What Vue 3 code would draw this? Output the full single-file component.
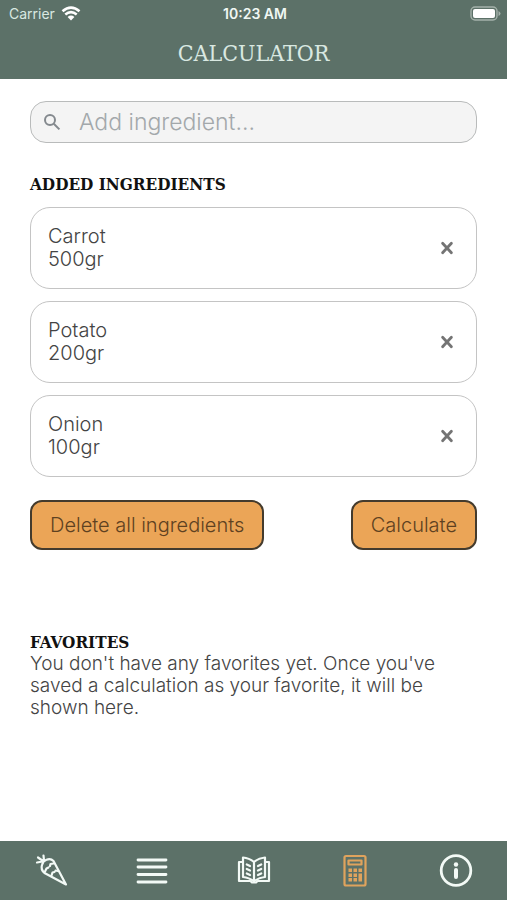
<template>
    <div class="app-screen">
        <header class="app-header">
            <div class="status-bar">
                <div class="carrier">
                    <span>Carrier</span>
                    <svg class="wifi-icon" viewBox="0 0 20 15" aria-hidden="true">
                        <path d="M1.5 5.2 Q10 -2 18.5 5.2" />
                        <path d="M4.3 8.4 Q10 3.8 15.7 8.4" />
                        <path class="wifi-dot" d="M6.6 10.9 Q10 8.2 13.4 10.9 L10 14.4 Z" />
                    </svg>
                </div>
                <span class="clock">10:23 AM</span>
                <svg class="battery-icon" viewBox="0 0 31 15" aria-hidden="true">
                    <rect class="battery-case" x="1" y="1" width="26" height="13" rx="4" />
                    <rect x="3" y="3" width="22" height="9" rx="2" fill="#fff" />
                    <path d="M28.5 5 Q30.5 6 30.5 7.5 Q30.5 9 28.5 10 Z" fill="#a4b1aa" />
                </svg>
            </div>
            <h1 class="page-title">CALCULATOR</h1>
        </header>

        <main class="content">
            <label class="search-box">
                <svg class="search-icon" viewBox="0 0 18 18" aria-hidden="true">
                    <circle cx="7" cy="7" r="5" />
                    <path d="M10.8 10.8 L16.4 16.4" />
                </svg>
                <input v-model="query" type="text" placeholder="Add ingredient..." aria-label="Add ingredient"
                    @keydown.enter="addIngredient" />
            </label>

            <h2 class="section-title">ADDED INGREDIENTS</h2>
            <ul class="ingredient-list">
                <li v-for="(item, index) in ingredients" :key="item.name" class="ingredient-card">
                    <div class="ingredient-info">
                        <div>{{ item.name }}</div>
                        <div>{{ item.amount }}gr</div>
                    </div>
                    <button class="remove-button" :aria-label="`Remove ${item.name}`" @click="removeIngredient(index)">
                        <svg viewBox="0 0 14 14" aria-hidden="true">
                            <path d="M2.6 2.2 L11.4 11.8 M11.4 2.2 L2.6 11.8" />
                        </svg>
                    </button>
                </li>
            </ul>

            <div class="actions">
                <button class="action-button" @click="ingredients = []">Delete all ingredients</button>
                <button class="action-button">Calculate</button>
            </div>

            <section class="favorites">
                <h2 class="section-title">FAVORITES</h2>
                <p>You don't have any favorites yet. Once you've saved a calculation as your favorite, it will be shown here.</p>
            </section>
        </main>

        <nav class="tab-bar">
            <button v-for="tab in tabs" :key="tab" :class="{ active: activeTab === tab }" :aria-label="tab"
                @click="activeTab = tab">
                <svg v-if="tab === 'Ingredients'" viewBox="0 0 36 36" aria-hidden="true">
                    <path d="M9 12 Q10 8 13.5 6.8 Q17.5 5 20.500 8 L33 31.500 L11.500 20 Q7.500 16.500 9 12 Z" />
                    <path d="M9.500 8.500 L4 9.500 M10 8 L5 4.500 M11 7.500 L10.500 2.500" />
                    <path d="M12 18.500 L13.500 15.500 L15.500 14.500 M20.500 10.500 L17.500 11 L17 13 M18.500 22.500 L19.500 19.500 L21.500 19 M25 18 L22.500 17.500" />
                </svg>
                <svg v-else-if="tab === 'List'" viewBox="0 0 36 36" aria-hidden="true">
                    <path class="bars" d="M4 7 H32 M4 14 H32 M4 21.500 H32 M4 29 H32" />
                </svg>
                <svg v-else-if="tab === 'Recipes'" viewBox="0 0 36 36" aria-hidden="true">
                    <path d="M18 9 Q13 5 7 4.500 V24 Q13 24.500 18 28.500 Q23 24.500 29 24 V4.500 Q23 5 18 9 V28" />
                    <path d="M7 9 H3 V28 H14.500 L16 29.500 H20 L21.500 28 H33 V9 H29" />
                    <path d="M10.800 11.500 L14 13 M10.800 16 L14 17.500 M10.800 20.500 L14 22 M25.200 11.500 L22 13 M25.200 16 L22 17.500 M25.200 20.500 L22 22" />
                </svg>
                <svg v-else-if="tab === 'Calculator'" viewBox="0 0 36 36" aria-hidden="true">
                    <rect x="7.500" y="3" width="21" height="29.500" rx="1.500" />
                    <rect x="11.500" y="7.500" width="13" height="4" />
                    <g class="keys">
                        <rect v-for="key in keys" :key="`${key.x}-${key.y}`" :x="key.x" :y="key.y" width="3.500" height="3.500" />
                        <rect x="21.500" y="20.500" width="3.500" height="8" />
                    </g>
                </svg>
                <svg v-else viewBox="0 0 36 36" aria-hidden="true">
                    <circle class="info-ring" cx="18" cy="17.500" r="14.800" />
                    <circle cx="18" cy="11.500" r="2.200" fill="currentColor" stroke="none" />
                    <path class="info-stem" d="M18 17 V24" />
                </svg>
            </button>
        </nav>
    </div>
</template>

<script setup>
import { ref } from 'vue';

const query = ref('');
const ingredients = ref([
    { name: 'Carrot', amount: 500 },
    { name: 'Potato', amount: 200 },
    { name: 'Onion', amount: 100 }
]);

const tabs = ['Ingredients', 'List', 'Recipes', 'Calculator', 'Info'];
const activeTab = ref('Calculator');

// small keys of the calculator icon
const keys = [
    { x: 11.5, y: 15.5 }, { x: 16.5, y: 15.5 }, { x: 21.5, y: 15.5 },
    { x: 11.5, y: 20.5 }, { x: 16.5, y: 20.5 },
    { x: 11.5, y: 25 }, { x: 16.5, y: 25 }
];

const addIngredient = () => {
    const name = query.value.trim();
    if (!name) return;
    ingredients.value.push({ name, amount: 100 });
    query.value = '';
};

const removeIngredient = (index) => {
    ingredients.value.splice(index, 1);
};
</script>

<style>
body {
    margin: 0;
    background-color: #fff;
}
</style>

<style scoped>
.app-screen {
    min-height: 100vh;
    display: flex;
    flex-direction: column;
    font-family: Inter, "Open Sans", sans-serif;
    font-weight: 300;
    color: #444;
}

button,
input {
    font: inherit;
    color: inherit;
}

button {
    cursor: pointer;
}

.app-header {
    background-color: #5c7168;
    color: #d9e8e1;
    padding-bottom: 9px;
}

.status-bar {
    display: grid;
    grid-template-columns: 1fr auto 1fr;
    align-items: center;
    height: 26px;
    padding: 0 6px 0 9px;
    font-size: 14px;
    font-weight: 400;
}

.carrier {
    display: flex;
    align-items: center;
    gap: 6px;
}

.wifi-icon {
    width: 20px;
    height: 15px;
    fill: none;
    stroke: #fff;
    stroke-width: 2.6;
}

.wifi-icon .wifi-dot {
    fill: #fff;
    stroke: none;
}

.clock {
    font-weight: 600;
    color: #f0f7f3;
}

.battery-icon {
    justify-self: end;
    width: 31px;
    height: 15px;
}

.battery-case {
    fill: none;
    stroke: #a4b1aa;
    stroke-width: 1.4;
}

.page-title {
    margin: 0;
    padding-top: 10px;
    font-family: "DejaVu Serif Condensed", "DejaVu Serif", serif;
    font-size: 23px;
    font-weight: 400;
    line-height: 34px;
    text-align: center;
}

.content {
    flex: 1;
    padding: 22px 30px;
}

.search-box {
    display: flex;
    align-items: center;
    gap: 18px;
    height: 40px;
    padding: 0 12px;
    border: 1px solid #b9bbbb;
    border-radius: 16px;
    background-color: #f4f4f4;
}

.search-icon {
    flex-shrink: 0;
    width: 18px;
    height: 18px;
    fill: none;
    stroke: #84898e;
    stroke-width: 2;
}

.search-box input {
    flex: 1;
    min-width: 0;
    padding: 0;
    border: none;
    outline: none;
    background: none;
    font-size: 23px;
}

.search-box input::placeholder {
    color: #a3a8ab;
    opacity: 1;
}

.section-title {
    margin: 0;
    font-family: "DejaVu Serif Condensed", "DejaVu Serif", serif;
    font-size: 17px;
    font-weight: 700;
    line-height: 22px;
    color: #111;
}

.search-box + .section-title {
    margin-top: 30px;
}

.ingredient-list {
    display: flex;
    flex-direction: column;
    gap: 12px;
    margin: 12px 0 23px;
    padding: 0;
    list-style: none;
}

.ingredient-card {
    display: flex;
    align-items: center;
    justify-content: space-between;
    padding: 17px 21px 17px 17px;
    border: 1px solid #c4c4c4;
    border-radius: 20px;
}

.ingredient-info {
    font-size: 20px;
    line-height: 23px;
}

.remove-button {
    display: flex;
    padding: 1px;
    border: none;
    background: none;
}

.remove-button svg {
    width: 14px;
    height: 14px;
    fill: none;
    stroke: #747474;
    stroke-width: 2.8;
    stroke-linecap: round;
}

.actions {
    display: flex;
    flex-wrap: wrap;
    justify-content: space-between;
    gap: 12px;
}

.action-button {
    padding: 11px 18px;
    border: 2px solid #443b2d;
    border-radius: 12px;
    background-color: #eba557;
    color: #5e4121;
    font-size: 20px;
    line-height: 24px;
}

.favorites {
    margin-top: 81px;
}

.favorites p {
    margin: 0;
    font-size: 19px;
    line-height: 22px;
}

.tab-bar {
    display: flex;
    height: 59px;
    background-color: #5c7168;
    color: #f3faf6;
}

.tab-bar button {
    flex: 1;
    display: flex;
    align-items: center;
    justify-content: center;
    padding: 0;
    border: none;
    background: none;
}

.tab-bar button.active {
    color: #dfa35d;
}

.tab-bar svg {
    width: 36px;
    height: 36px;
    fill: none;
    stroke: currentColor;
    stroke-width: 2.2;
    stroke-linecap: round;
    stroke-linejoin: round;
}

.tab-bar .bars,
.tab-bar .info-ring {
    stroke-width: 2.8;
}

.tab-bar .info-stem {
    stroke-width: 4;
}

.tab-bar .keys {
    stroke: none;
    fill: currentColor;
}
</style>
